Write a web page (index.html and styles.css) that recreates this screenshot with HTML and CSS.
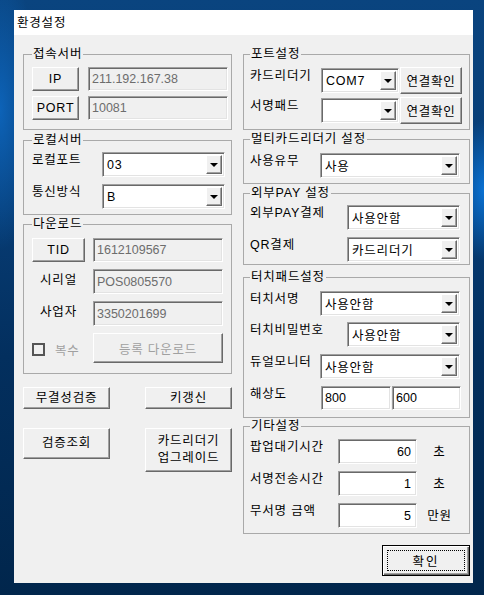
FILE: index.html
```html
<!DOCTYPE html>
<html lang="ko">
<head>
    <meta charset="UTF-8">
    <meta name="viewport" content="width=device-width, initial-scale=1.0">
    <title>환경설정</title>
    <link rel="stylesheet" href="styles.css">
</head>
<body>
    <div class="window">
        <div class="titlebar">환경설정</div>
        <div class="client">
            <!-- left column -->
            <div class="col">
                <fieldset class="group g-server">
                    <legend>접속서버</legend>
                    <div class="rows">
                        <div class="row r-server">
                            <button class="btn">IP</button>
                            <div class="field off">211.192.167.38</div>
                        </div>
                        <div class="row r-server">
                            <button class="btn">PORT</button>
                            <div class="field off">10081</div>
                        </div>
                    </div>
                </fieldset>

                <fieldset class="group g-local">
                    <legend>로컬서버</legend>
                    <div class="rows">
                        <div class="row r-local">
                            <span class="lbl">로컬포트</span>
                            <div class="combo"><span class="val">03</span><span class="arrow"></span></div>
                        </div>
                        <div class="row r-local">
                            <span class="lbl">통신방식</span>
                            <div class="combo"><span class="val">B</span><span class="arrow"></span></div>
                        </div>
                    </div>
                </fieldset>

                <fieldset class="group g-download">
                    <legend>다운로드</legend>
                    <div class="rows">
                        <div class="row r-down r-tid">
                            <button class="btn">TID</button>
                            <div class="field off">1612109567</div>
                        </div>
                        <div class="row r-down">
                            <span class="lbl center">시리얼</span>
                            <div class="field off">POS0805570</div>
                        </div>
                        <div class="row r-down">
                            <span class="lbl center">사업자</span>
                            <div class="field off">3350201699</div>
                        </div>
                        <div class="row r-down r-reg">
                            <label class="check"><span class="box"></span><span class="dim">복수</span></label>
                            <button class="btn disabled">등록 다운로드</button>
                        </div>
                    </div>
                </fieldset>

                <div class="actions">
                    <button class="btn a-short">무결성검증</button>
                    <button class="btn a-short">키갱신</button>
                    <button class="btn a-mid">검증조회</button>
                    <button class="btn a-tall">카드리더기<br>업그레이드</button>
                </div>
            </div>

            <!-- right column -->
            <div class="col">
                <fieldset class="group g-port">
                    <legend>포트설정</legend>
                    <div class="rows">
                        <div class="row r-port">
                            <span class="lbl">카드리더기</span>
                            <div class="combo"><span class="val">COM7</span><span class="arrow"></span></div>
                            <button class="btn">연결확인</button>
                        </div>
                        <div class="row r-port">
                            <span class="lbl">서명패드</span>
                            <div class="combo"><span class="val"></span><span class="arrow"></span></div>
                            <button class="btn">연결확인</button>
                        </div>
                    </div>
                </fieldset>

                <fieldset class="group g-multi">
                    <legend>멀티카드리더기 설정</legend>
                    <div class="rows">
                        <div class="row r-wide">
                            <span class="lbl">사용유무</span>
                            <div class="combo"><span class="val">사용</span><span class="arrow"></span></div>
                        </div>
                    </div>
                </fieldset>

                <fieldset class="group g-pay">
                    <legend>외부PAY 설정</legend>
                    <div class="rows">
                        <div class="row r-narrow">
                            <span class="lbl">외부PAY결제</span>
                            <div class="combo"><span class="val">사용안함</span><span class="arrow"></span></div>
                        </div>
                        <div class="row r-narrow">
                            <span class="lbl">QR결제</span>
                            <div class="combo"><span class="val">카드리더기</span><span class="arrow"></span></div>
                        </div>
                    </div>
                </fieldset>

                <fieldset class="group g-touch">
                    <legend>터치패드설정</legend>
                    <div class="rows">
                        <div class="row r-wide h23">
                            <span class="lbl">터치서명</span>
                            <div class="combo"><span class="val">사용안함</span><span class="arrow"></span></div>
                        </div>
                        <div class="row r-narrow h24">
                            <span class="lbl">터치비밀번호</span>
                            <div class="combo"><span class="val">사용안함</span><span class="arrow"></span></div>
                        </div>
                        <div class="row r-wide h24">
                            <span class="lbl">듀얼모니터</span>
                            <div class="combo"><span class="val">사용안함</span><span class="arrow"></span></div>
                        </div>
                        <div class="row r-res h24">
                            <span class="lbl">해상도</span>
                            <div class="field">800</div>
                            <div class="field">600</div>
                        </div>
                    </div>
                </fieldset>

                <fieldset class="group g-etc">
                    <legend>기타설정</legend>
                    <div class="rows">
                        <div class="row r-etc">
                            <span class="lbl">팝업대기시간</span>
                            <div class="field num">60</div>
                            <span class="unit">초</span>
                        </div>
                        <div class="row r-etc">
                            <span class="lbl">서명전송시간</span>
                            <div class="field num">1</div>
                            <span class="unit">초</span>
                        </div>
                        <div class="row r-etc">
                            <span class="lbl">무서명 금액</span>
                            <div class="field num">5</div>
                            <span class="unit">만원</span>
                        </div>
                    </div>
                </fieldset>

                <button class="btn btn-ok"><span class="focus">확인</span></button>
            </div>
        </div>
    </div>
</body>
</html>
```

FILE: styles.css
```css
* {
    box-sizing: border-box;
}
body {
    margin: 0;
    padding: 10px 0 0 14px;
    height: 595px;
    overflow: hidden;
    font-family: "Liberation Sans", "Noto Sans CJK KR", sans-serif;
    font-size: 12.5px;
    letter-spacing: 0.8px;
    color: #000;
    background:
        radial-gradient(ellipse 40px 140px at 0 110px, #0d63b8, transparent),
        radial-gradient(ellipse 30px 70px at 484px 190px, #0a72d4, transparent),
        linear-gradient(180deg, #0a447f 0%, #073c74 35%, #032f5e 60%, #01264c 100%);
}
.window {
    width: 459px;
    height: 573px;
    background-color: #f0f0f0;
    display: flex;
    flex-direction: column;
}
.titlebar {
    height: 25px;
    background-color: #fff;
    padding: 5px 0 0 3px;
    line-height: 16px;
}
.client {
    flex: 1;
    display: grid;
    grid-template-columns: 209px 227px;
    column-gap: 11px;
    padding-left: 9px;
    align-items: start;
}
.col {
    display: flex;
    flex-direction: column;
}

/* group boxes */
.group {
    margin: 0;
    min-width: 0;
    border: 1px solid #a9a9a9;
}
.group legend {
    padding: 0 1px;
    line-height: 14px;
}
.rows {
    display: flex;
    flex-direction: column;
}
.row {
    display: grid;
    align-items: center;
}
.lbl {
    align-self: start;
    line-height: 14px;
    padding-top: 1px;
    white-space: nowrap;
}
.lbl.center {
    text-align: center;
    padding-top: 4px;
}

/* controls */
.btn {
    font: inherit;
    letter-spacing: inherit;
    color: #000;
    background-color: #f0f0f0;
    border: 1px solid;
    border-color: #fff #696969 #696969 #fff;
    box-shadow: inset -1px -1px 0 #a0a0a0;
    padding: 0;
    height: 100%;
}
.btn.disabled {
    color: #a0a0a0;
}
.field {
    height: 100%;
    border: 1px solid;
    border-color: #a0a0a0 #fff #fff #a0a0a0;
    box-shadow: inset 1px 1px 0 #696969, inset -1px -1px 0 #e3e3e3;
    background-color: #fff;
    padding: 0 3px;
    display: flex;
    align-items: center;
    letter-spacing: 0;
    white-space: nowrap;
}
.field.off {
    background-color: #f0f0f0;
    color: #6d6d6d;
}
.field.num {
    justify-content: flex-end;
    padding-right: 5px;
}
.combo {
    height: 25px;
    display: flex;
    border: 1px solid;
    border-color: #a0a0a0 #fff #fff #a0a0a0;
    box-shadow: inset 1px 1px 0 #696969, inset -1px -1px 0 #e3e3e3;
    background-color: #fff;
    padding: 2px;
}
.combo .val {
    flex: 1;
    display: flex;
    align-items: center;
    padding-left: 2px;
}
.combo .arrow {
    width: 16px;
    background-color: #f0f0f0;
    border: 1px solid;
    border-color: #fff #696969 #696969 #fff;
    box-shadow: inset -1px -1px 0 #a0a0a0;
    display: flex;
    align-items: center;
    justify-content: center;
}
.combo .arrow::before {
    content: "";
    border-left: 4px solid transparent;
    border-right: 4px solid transparent;
    border-top: 4px solid #000;
    margin-top: 1px;
}

/* 접속서버 */
.g-server {
    margin-top: 12px;
    padding: 6px 3px 9px 8px;
}
.g-server .rows {
    gap: 5px;
}
.r-server {
    grid-template-columns: 47px 140px;
    column-gap: 9px;
    height: 24px;
}

/* 로컬서버 */
.g-local {
    margin-top: 3px;
    padding: 5px 3px 5px 8px;
}
.g-local .rows {
    gap: 7px;
}
.r-local {
    grid-template-columns: 70px 123px;
    height: 25px;
}

/* 다운로드 */
.g-download {
    margin-top: 2px;
    padding: 7px 3px 10px 8px;
}
.g-download .rows {
    gap: 7px;
}
.r-down {
    grid-template-columns: 53px 130px;
    column-gap: 8px;
    height: 25px;
}
.r-tid {
    height: 24px;
}
.r-reg {
    height: 30px;
}
.check {
    display: flex;
    align-items: center;
    gap: 10px;
    padding-top: 2px;
}
.check .box {
    width: 13px;
    height: 13px;
    border: 2px solid #555;
    background-color: #f0f0f0;
}
.dim {
    color: #a0a0a0;
}

/* bottom-left buttons */
.actions {
    margin-top: 13px;
    display: grid;
    grid-template-columns: 87px 87px;
    column-gap: 35px;
    row-gap: 19px;
    align-items: start;
}
.actions .btn {
    line-height: 17px;
}
.a-short {
    height: 22px;
}
.a-mid {
    height: 31px;
}
.a-tall {
    height: 44px;
}

/* 포트설정 */
.g-port {
    margin-top: 12px;
    padding: 6px 3px 5px 6px;
}
.g-port .rows {
    gap: 3px;
}
.r-port {
    grid-template-columns: 70px 78px 62px;
    column-gap: 1px;
    height: 27px;
}
.r-port .lbl {
    padding-top: 2px;
}

/* shared right rows */
.r-wide {
    grid-template-columns: 70px 140px;
    height: 25px;
}
.r-narrow {
    grid-template-columns: 97px 113px;
    height: 25px;
}
.r-res {
    grid-template-columns: 70px 70px 69px;
    column-gap: 1px;
}
.h23 {
    height: 23px;
}
.h24 {
    height: 24px;
}
.h23 .combo,
.h24 .combo {
    height: 100%;
}

.g-multi {
    margin-top: 2px;
    padding: 7px 3px 5px 6px;
}
.g-pay {
    margin-top: 2px;
    padding: 5px 3px 2px 6px;
}
.g-pay .rows {
    gap: 7px;
}
.g-touch {
    margin-top: 5px;
    padding: 7px 3px 7px 6px;
}
.g-touch .rows {
    gap: 8px;
}

/* 기타설정 */
.g-etc {
    margin-top: 1px;
    padding: 6px 3px 5px 6px;
}
.g-etc .rows {
    gap: 7px;
}
.r-etc {
    grid-template-columns: 88px 79px 45px;
    height: 25px;
}
.unit {
    text-align: center;
    align-self: start;
    padding-top: 2px;
}

.btn-ok {
    align-self: flex-end;
    margin-top: 11px;
    width: 88px;
    height: 31px;
    border: 1px solid #000;
    box-shadow: inset 1px 1px 0 #fff, inset -1px -1px 0 #696969, inset -2px -2px 0 #a0a0a0;
    padding: 4px;
}
.btn-ok .focus {
    display: flex;
    align-items: center;
    justify-content: center;
    height: 100%;
    border: 1px dotted #000;
    letter-spacing: 2px;
}
```
